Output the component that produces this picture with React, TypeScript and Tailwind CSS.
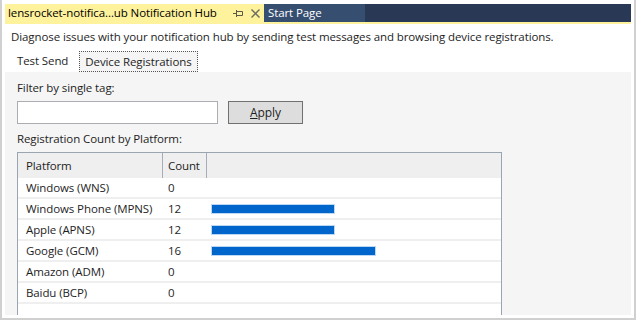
import React from "react";

type Row = { name: string; count: number };

const rows: Row[] = [
  { name: "Windows (WNS)", count: 0 },
  { name: "Windows Phone (MPNS)", count: 12 },
  { name: "Apple (APNS)", count: 12 },
  { name: "Google (GCM)", count: 16 },
  { name: "Amazon (ADM)", count: 0 },
  { name: "Baidu (BCP)", count: 0 },
];

// px per registration
const BAR_SCALE = 10.2;

function PinIcon() {
  return (
    <svg width="11" height="9" viewBox="0 0 11 9" className="block">
      <path d="M0 4.5H3.5M3.5 1V8M3.5 2.5H9.5V6.5H3.5" fill="none" stroke="#5a5a4a" strokeWidth="1" />
    </svg>
  );
}

function CloseIcon() {
  return (
    <svg width="9" height="9" viewBox="0 0 9 9" className="block">
      <path d="M0.5 0.5L8.5 8.5M8.5 0.5L0.5 8.5" fill="none" stroke="#6b6b5e" strokeWidth="1.4" />
    </svg>
  );
}

export default function App() {
  return (
    <div
      className="w-[636px] h-[320px] bg-white border-x-2 border-b-2 border-[#d0d0d0] pt-[4px] px-[3px] pb-[3px] flex flex-col overflow-hidden text-[11.5px] tracking-[-0.1px] text-[#1e1e1e]"
      style={{ fontFamily: "'Segoe UI', 'Open Sans', sans-serif" }}
    >
      {/* tab strip */}
      <div className="flex h-[20px] shrink-0 bg-[#293955] border-b-2 border-[#fff29d]">
        <div className="flex items-center w-[259px] shrink-0 bg-[#fff29d] pl-[3px] text-black whitespace-nowrap">
          <span className="leading-none w-[225px]">lensrocket-notifica...ub Notification Hub</span>
          <span className="mt-[1px]">
            <PinIcon />
          </span>
          <span className="ml-[7px] mt-[1px]">
            <CloseIcon />
          </span>
        </div>
        <div className="flex items-center w-[101px] shrink-0 bg-[#364e6f] pl-[4px] text-white whitespace-nowrap">
          <span className="leading-none">Start Page</span>
        </div>
      </div>

      <div className="pl-[6px] pt-[5px] h-[22px] leading-[16px] whitespace-nowrap">
        Diagnose issues with your notification hub by sending test messages and browsing device registrations.
      </div>

      {/* inner tabs */}
      <div className="flex items-end h-[26px] pl-[12px]">
        <div className="h-[21px] pr-[11px] leading-[20px]">Test Send</div>
        <div className="h-[21px] px-[5px] leading-[20px] bg-[#f5f5f5] border border-dotted border-[#555]">
          Device Registrations
        </div>
      </div>

      {/* panel */}
      <div className="flex-1 bg-[#f5f5f5] pl-[12px] overflow-hidden">
        <div className="pt-[8px] leading-[16px]">Filter by single tag:</div>
        <div className="flex gap-[10px] mt-[5px]">
          <div className="w-[201px] h-[23px] bg-white border border-[#abadb3]" />
          <button className="w-[75px] h-[23px] bg-[#dddddd] border border-[#707070] leading-[20px] text-center text-[12px]">
            <span className="underline">A</span>pply
          </button>
        </div>
        <div className="mt-[7px] leading-[16px]">Registration Count by Platform:</div>

        <div className="mt-[5px] w-[485px] h-[200px] bg-white border-t border-x border-[#9ba5b2]">
          <div className="flex h-[25px] bg-[#efefef] leading-[25px]">
            <div className="w-[145px] pl-[8px] border-r border-[#a5adb8]">Platform</div>
            <div className="w-[44px] pl-[5px] border-r border-[#a5adb8]">Count</div>
            <div className="flex-1" />
          </div>
          {rows.map((r) => (
            <div key={r.name} className="flex items-center h-[21px] border-b-2 border-[#efefef]">
              <div className="w-[145px] pl-[8px]">{r.name}</div>
              <div className="w-[45px] pl-[5px]">{r.count}</div>
              <div className="flex-1 pl-[4px] flex items-center">
                {r.count > 0 && (
                  <div
                    className="h-[8px] bg-[#0066cc] outline outline-1 outline-[#bcd8f4]"
                    style={{ width: Math.round(r.count * BAR_SCALE) }}
                  />
                )}
              </div>
            </div>
          ))}
        </div>
      </div>
    </div>
  );
}
